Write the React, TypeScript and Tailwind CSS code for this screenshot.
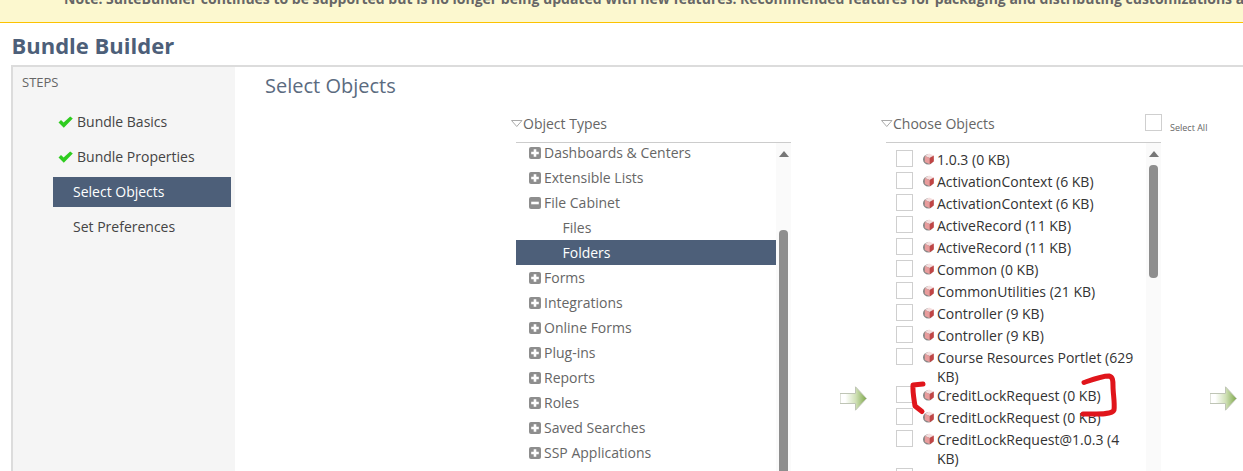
const objectTypes = [
  { label: 'Dashboards & Centers', icon: 'plus' },
  { label: 'Extensible Lists', icon: 'plus' },
  { label: 'File Cabinet', icon: 'minus' },
  { label: 'Files', icon: 'none' },
  { label: 'Folders', icon: 'none', active: true },
  { label: 'Forms', icon: 'plus' },
  { label: 'Integrations', icon: 'plus' },
  { label: 'Online Forms', icon: 'plus' },
  { label: 'Plug-ins', icon: 'plus' },
  { label: 'Reports', icon: 'plus' },
  { label: 'Roles', icon: 'plus' },
  { label: 'Saved Searches', icon: 'plus' },
  { label: 'SSP Applications', icon: 'plus' },
];

const objects = [
  '1.0.3 (0 KB)',
  'ActivationContext (6 KB)',
  'ActivationContext (6 KB)',
  'ActiveRecord (11 KB)',
  'ActiveRecord (11 KB)',
  'Common (0 KB)',
  'CommonUtilities (21 KB)',
  'Controller (9 KB)',
  'Controller (9 KB)',
  'Course Resources Portlet (629 KB)',
  'CreditLockRequest (0 KB)',
  'CreditLockRequest (0 KB)',
  'CreditLockRequest@1.0.3 (4 KB)',
];

function Check() {
  return (
    <svg width="15" height="12" viewBox="0 0 15 12" className="shrink-0">
      <path d="M0.5 6.5 L3 4 L5.6 6.6 L12.2 0.5 L14.8 2.5 L5.8 11.8 Z" fill="#2ecc1f" />
    </svg>
  );
}

function Triangle() {
  return (
    <svg width="12" height="8" viewBox="0 0 12 8" className="shrink-0">
      <path d="M0.5 0.5 H11 L5.75 6.5 Z" fill="#fff" stroke="#aaa" />
    </svg>
  );
}

function TreeIcon({ type }: { type: string }) {
  return (
    <svg width="12" height="12" viewBox="0 0 12 12" className="shrink-0">
      <rect width="12" height="12" rx="2" fill="#8e8e8e" />
      {type === 'plus' && <path d="M2.2 6 H9.8 M6 2.2 V9.8" stroke="#fff" strokeWidth="2.6" />}
      {type === 'minus' && <path d="M2.2 6 H9.8" stroke="#fff" strokeWidth="2.6" />}
    </svg>
  );
}

function Cube() {
  return (
    <svg width="11" height="12" viewBox="0 0 11 12" className="mt-[3px] shrink-0">
      <circle cx="5.2" cy="6.4" r="5.2" fill="#858585" />
      <path d="M6 0.6 L10.8 2.6 L6.8 5 L1.8 3 Z" fill="#f5dede" />
      <path d="M1.8 3 L6.8 5 V11.2 L1.8 9 Z" fill="#e99c9c" />
      <path d="M6.8 5 L10.8 2.6 V8.6 L6.8 11.2 Z" fill="#c04545" />
    </svg>
  );
}

function Box({ className }: { className: string }) {
  return <div className={`h-[17px] w-[17px] shrink-0 border border-[#cfcfcf] bg-white ${className}`} />;
}

function Arrow({ className }: { className: string }) {
  return (
    <svg width="27" height="25" viewBox="0 0 27 25" className={`shrink-0 ${className}`}>
      <defs>
        <linearGradient id="arrowFill" x1="0" x2="1" y1="0" y2="0">
          <stop offset="0" stopColor="#ffffff" />
          <stop offset="0.2" stopColor="#ffffff" />
          <stop offset="0.6" stopColor="#cfe0b5" />
          <stop offset="1" stopColor="#7fa94c" />
        </linearGradient>
      </defs>
      <path d="M0 7.5 H15.5 V0.8 L26.5 12.5 L15.5 24.2 V17.5 H0 Z" fill="url(#arrowFill)" stroke="#bfc5b6" />
    </svg>
  );
}

function Scrollbar({ thumb }: { thumb: string }) {
  return (
    <div className="flex h-[400px] w-[15px] shrink-0 flex-col items-center bg-[#fafafa]">
      <svg width="10" height="6" viewBox="0 0 10 6" className="mt-[8px] shrink-0">
        <path d="M5 0 L10 6 H0 Z" fill="#777" />
      </svg>
      <div className={`w-[9px] rounded-[4px] bg-[#8e8e8e] ${thumb}`} />
    </div>
  );
}

export default function App() {
  return (
    <div className="relative h-[471px] w-[1243px] overflow-hidden bg-white font-['Open_Sans',sans-serif]">
      <div className="h-[23px] overflow-hidden border-b border-[#fcc200] bg-[#fcf8cf]">
        <p className="mt-[-11px] whitespace-nowrap pl-[64px] text-[14px] leading-[19px] font-bold text-[#666]">
          Note: SuiteBundler continues to be supported but is no longer being updated with new features. Recommended features for packaging and distributing customizations are available
        </p>
      </div>

      <h1 className="mt-[7px] pl-[11.5px] text-[22px] leading-[30px] font-bold text-[#4d5f79]">Bundle Builder</h1>

      <div className="ml-[11px] mt-[5px] flex border-t-2 border-l-2 border-[#dcdcdc]">
        <aside className="h-[404px] w-[222px] shrink-0 bg-[#f5f5f5]">
          <div className="pl-[9px] pt-[6px] text-[13px] leading-[18px] text-[#666]">STEPS</div>
          <div className="ml-[40px] mt-[13px] w-[178px] text-[14px] text-[#444]">
            <div className="flex h-[35px] items-center gap-[4px] pl-[5px]">
              <Check />
              <span>Bundle Basics</span>
            </div>
            <div className="flex h-[35px] items-center gap-[4px] pl-[5px]">
              <Check />
              <span>Bundle Properties</span>
            </div>
            <div className="my-[2.5px] flex h-[30px] items-center bg-[#4d5f79] pl-[20px] text-white">Select Objects</div>
            <div className="mt-[2.5px] flex h-[35px] items-center pl-[20px]">Set Preferences</div>
          </div>
        </aside>

        <main className="min-w-0 flex-1 pl-[30px] pt-[5px]">
          <h2 className="text-[20px] leading-[27px] text-[#5b6b80]">Select Objects</h2>

          <div className="ml-[246px] mt-[15px] flex items-start">
            <section className="w-[280px] shrink-0">
              <div className="flex h-[28px] items-start text-[14px] text-[#666]">
                <div className="mt-[-1px] flex items-center">
                  <Triangle />
                  <span>Object Types</span>
                </div>
              </div>
              <div className="ml-[5px] flex h-[400px] overflow-hidden border-t border-[#ccc]">
                <div className="mt-[-3px] w-[260px] shrink-0 text-[14px] text-[#666]">
                  {objectTypes.map((item) => (
                    <div
                      key={item.label}
                      className={`flex h-[25px] items-center gap-[3px] ${item.active ? 'bg-[#4d5f79] text-white' : ''} ${item.icon === 'none' ? 'pl-[46.5px]' : 'pl-[13px]'}`}
                    >
                      {item.icon !== 'none' && <TreeIcon type={item.icon} />}
                      <span>{item.label}</span>
                    </div>
                  ))}
                </div>
                <Scrollbar thumb="mt-[73px] h-[300px]" />
              </div>
            </section>

            <Arrow className="ml-[49px] mt-[272px]" />

            <section className="ml-[14px] w-[280px] shrink-0">
              <div className="flex h-[28px] items-start text-[14px] text-[#666]">
                <div className="mt-[-1px] flex items-center">
                  <Triangle />
                  <span>Choose Objects</span>
                </div>
                <Box className="ml-auto mr-[-1px]" />
                <span className="ml-[9px] mr-[-9px] mt-[8px] w-0 whitespace-nowrap text-[9px] leading-[12px] text-[#666]">Select All</span>
              </div>
              <div className="ml-[5px] flex h-[400px] overflow-hidden border-t border-[#ccc]">
                <div className="w-[260px] shrink-0 pl-[10px] pt-[7px] text-[14px] leading-[19px] text-[#333]">
                  {objects.map((name, i) => (
                    <div key={i} className="flex min-h-[22px] items-start">
                      <Box className="" />
                      <div className="ml-[10px] flex min-w-0 w-[212px] gap-[3px]">
                        <Cube />
                        <span className="min-w-0">{name}</span>
                      </div>
                    </div>
                  ))}
                  <Box className="" />
                </div>
                <Scrollbar thumb="mt-[8px] h-[113px]" />
              </div>
            </section>

            <Arrow className="ml-[49px] mt-[272px]" />
          </div>
        </main>
      </div>

      <svg width="1243" height="471" className="pointer-events-none absolute left-0 top-0">
        <path d="M923 384 L913 385 C912.5 392 914 399 915 406 L922 411.5" fill="none" stroke="#e0151b" strokeWidth="5" strokeLinecap="round" strokeLinejoin="round" />
        <path d="M1084 382.5 C1094 379 1102 376 1109 376 C1113 377 1113 381 1113 386 C1113 394 1115 403 1114 410 C1112 415 1096 414 1083 414" fill="none" stroke="#e0151b" strokeWidth="5" strokeLinecap="round" strokeLinejoin="round" />
      </svg>
    </div>
  );
}
